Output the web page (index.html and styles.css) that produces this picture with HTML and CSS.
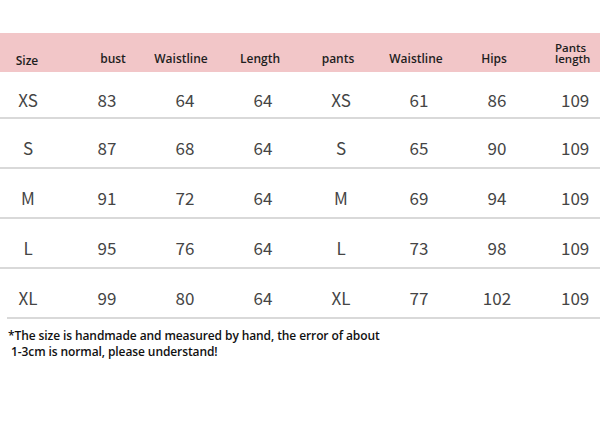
FILE: index.html
```html
<!DOCTYPE html>
<html>
<head>
<meta charset="utf-8">
<link rel="stylesheet" href="styles.css">
</head>
<body>
<div class="page">
  <div class="head">
    <div class="hc h-size">Size</div>
    <div class="hc h-bust">bust</div>
    <div class="hc h-waist">Waistline</div>
    <div class="hc">Length</div>
    <div class="hc">pants</div>
    <div class="hc">Waistline</div>
    <div class="hc">Hips</div>
    <div class="hc h-plen">Pants<br>length</div>
  </div>
  <div class="row row-first">
    <div class="c c1">XS</div><div class="c">83</div><div class="c">64</div><div class="c">64</div><div class="c">XS</div><div class="c">61</div><div class="c">86</div><div class="c c8">109</div>
  </div>
  <div class="row">
    <div class="c c1">S</div><div class="c">87</div><div class="c">68</div><div class="c">64</div><div class="c">S</div><div class="c">65</div><div class="c">90</div><div class="c c8">109</div>
  </div>
  <div class="row">
    <div class="c c1">M</div><div class="c">91</div><div class="c">72</div><div class="c">64</div><div class="c">M</div><div class="c">69</div><div class="c">94</div><div class="c c8">109</div>
  </div>
  <div class="row">
    <div class="c c1">L</div><div class="c">95</div><div class="c">76</div><div class="c">64</div><div class="c">L</div><div class="c">73</div><div class="c">98</div><div class="c c8">109</div>
  </div>
  <div class="row row-last">
    <div class="c c1">XL</div><div class="c">99</div><div class="c">80</div><div class="c">64</div><div class="c">XL</div><div class="c">77</div><div class="c">102</div><div class="c c8">109</div>
  </div>
  <div class="rule"></div>
  <p class="note">*The size is handmade and measured by hand, the error of about<br>&nbsp;1-3cm is normal, please understand!</p>
</div>
</body>
</html>
```
FILE: styles.css
```css
html, body {
  margin: 0;
  padding: 0;
  background: #ffffff;
  overflow: hidden;
}
.page {
  width: 600px;
  padding-top: 33px;
}
.head,
.row {
  display: grid;
  grid-template-columns: 68px 78px 78px 78px 78px 78px 78px 64px;
}
.head {
  height: 39px;
  background: #f2c6c8;
  align-items: end;
  font-family: "Open Sans", "Liberation Sans", sans-serif;
  font-weight: 600;
  font-size: 12px;
  line-height: 14px;
  color: #1e1e1e;
}
.hc {
  text-align: center;
  padding-right: 6px;
  padding-bottom: 6px;
}
.h-size {
  padding-right: 14px;
  padding-bottom: 4px;
}
.h-bust {
  padding-right: 0;
  padding-left: 12px;
}
.h-waist {
  padding-right: 8px;
}
.h-plen {
  text-align: left;
  padding-right: 0;
  padding-left: 19px;
  font-size: 11.5px;
  line-height: 11px;
  padding-bottom: 8px;
}
.row {
  height: 48px;
  box-sizing: content-box;
  border-bottom: 2px solid #d9d9d9;
  font-family: "Noto Sans CJK SC", "Noto Sans", sans-serif;
  font-size: 17px;
  line-height: 20px;
  color: #454545;
}
.row-first {
  height: 45px;
}
.row-last {
  border-bottom: none;
}
.c {
  text-align: center;
  padding-top: 19px;
}
.row-first .c {
  padding-top: 18px;
}
.c1 {
  padding-right: 12px;
}
.c8 {
  text-align: left;
  padding-left: 25px;
}
.rule {
  margin-left: 7px;
  height: 2px;
  background: #d9d9d9;
}
.note {
  margin: 9px 0 0 8px;
  font-family: "Open Sans", "Liberation Sans", sans-serif;
  font-weight: 600;
  font-size: 12px;
  line-height: 16px;
  letter-spacing: -0.1px;
  color: #111111;
}
```
